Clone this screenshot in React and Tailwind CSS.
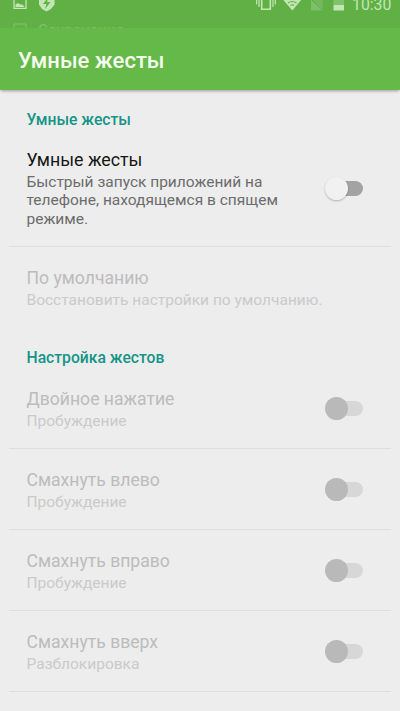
import React from 'react';

const gestures = [
  { title: 'Двойное нажатие', action: 'Пробуждение' },
  { title: 'Смахнуть влево', action: 'Пробуждение' },
  { title: 'Смахнуть вправо', action: 'Пробуждение' },
  { title: 'Смахнуть вверх', action: 'Разблокировка' },
];

function Toggle({ disabled }) {
  return (
    <div className={`flex h-[15px] w-[37px] shrink-0 items-center rounded-full ${disabled ? 'bg-[#d7d7d7]' : 'bg-[#a3a3a3]'}`}>
      <div className={`-ml-[1px] size-[23px] shrink-0 rounded-full ${disabled ? 'bg-[#b9b9b9]' : 'bg-[#f1f1f1] shadow-[0_1px_2px_rgba(0,0,0,0.25)]'}`} />
    </div>
  );
}

function SectionTitle({ children }) {
  return <h2 className="text-[15.7px] leading-5 font-medium text-[#159588]">{children}</h2>;
}

function StatusBar() {
  return (
    <div className="relative h-7 overflow-hidden bg-[#61b046] text-[#c3e6b5]">
      <svg className="block h-7 w-[400px]" viewBox="0 0 400 28" fill="none">
        {/* screenshot notification */}
        <path d="M14 -4V8.3H26V-4" stroke="currentColor" strokeWidth="1.3" />
        <path d="M15.500 7V4.500L18 3L20 4.500H22.500L24.500 7Z" fill="currentColor" />
        {/* power badge */}
        <path d="M39 -3H54.500V4.500L51 9L46.500 11.500L42 9L39 4.500Z" fill="currentColor" />
        <path d="M48.500 -3L43 4H46.500L45 9L50.500 2H47Z" fill="#61b046" />
        {/* vibrate */}
        <path d="M261.700 -4V9.200H270.300V-4" stroke="currentColor" strokeWidth="1.600" />
        <path d="M259 -2V7M273 -2V7M256.700 0V4.500M275.300 0V4.500" stroke="currentColor" strokeWidth="1.200" />
        {/* wifi */}
        <path d="M282.500 -1H302L292.300 10.500Z" fill="currentColor" />
        <path d="M288 3Q292.300 0 296.500 3M290.500 5.500Q292.300 4 294 5.500" stroke="#61b046" strokeWidth="1.100" />
        {/* no sim */}
        <path d="M311 0L322.500 10.500H311Z" fill="currentColor" opacity="0.300" />
        <path d="M311 -2H322.500V10Z" fill="currentColor" opacity="0.200" />
        {/* battery */}
        <path d="M333.500 -2H344V5H333.500Z" fill="currentColor" opacity="0.350" />
        <path d="M333.500 5H344V10.500H333.500Z" fill="currentColor" />
        <path d="M14 30V24H26V30" stroke="currentColor" strokeWidth="1" opacity="0.350" />
      </svg>
      <span className="absolute -top-[6px] left-[352px] text-[15.8px] leading-[21px]">10:30</span>
      <span className="absolute top-[20px] left-[38px] text-[15.3px] leading-5 whitespace-nowrap opacity-30">Сохранение</span>
    </div>
  );
}

function App() {
  return (
    <div className="h-[711px] w-[400px] overflow-hidden bg-[#ededed] font-['Roboto','Liberation_Sans',sans-serif]">
      <StatusBar />
      <header className="flex h-[62px] items-center bg-[#65b948] pl-[18px] shadow-[0_2px_3px_-1px_rgba(0,0,0,0.35)]">
        <h1 className="pt-[3px] text-[22px] leading-7 font-medium text-[#f4fbef]">Умные жесты</h1>
      </header>

      <main className="px-[9px]">
        <div className="px-[17.5px] pt-[20px]">
          <SectionTitle>Умные жесты</SectionTitle>
        </div>

        <div className="flex h-[117px] items-center justify-between border-b border-[#dedede] pr-[28px] pl-[17.5px]">
          <div className="w-[270px]">
            <h3 className="text-[17.8px] leading-6 text-[#161616]">Умные жесты</h3>
            <p className="pt-px text-[15.5px] leading-[18.5px] text-[#6c6c6c]">
              Быстрый запуск приложений на телефоне, находящемся в спящем режиме.
            </p>
          </div>
          <Toggle />
        </div>

        <div className="h-[82px] px-[17.5px] pt-[19px] text-[#bcbcbc]">
          <h3 className="text-[17.6px] leading-6">По умолчанию</h3>
          <p className="text-[15.5px] leading-[21px] text-[#cacaca]">Восстановить настройки по умолчанию.</p>
        </div>

        <div className="px-[17.5px] pt-[19px]">
          <SectionTitle>Настройка жестов</SectionTitle>
        </div>

        {gestures.map((gesture) => (
          <div key={gesture.title} className="flex h-[81px] items-center justify-between border-b border-[#dedede] pr-[28px] pl-[17.5px]">
            <div className="pt-[3px]">
              <h3 className="text-[17.6px] leading-6 text-[#bcbcbc]">{gesture.title}</h3>
              <p className="text-[15.5px] leading-[21px] text-[#cacaca]">{gesture.action}</p>
            </div>
            <Toggle disabled />
          </div>
        ))}
      </main>
    </div>
  );
}

export default App;
